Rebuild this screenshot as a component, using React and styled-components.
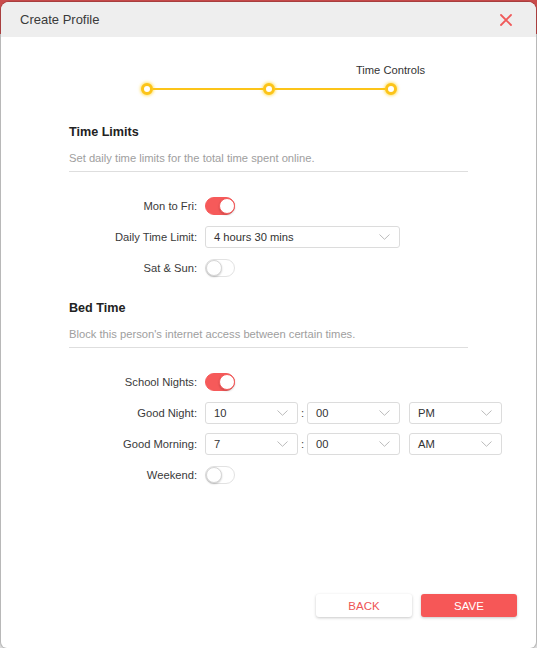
import React from "react";
import styled, { createGlobalStyle } from "styled-components";

const Global = createGlobalStyle`
  html, body { margin: 0; padding: 0; }
  body {
    background: linear-gradient(#c94b4b 0, #c94b4b 34px, #dcdcdc 34px);
    font-family: "Liberation Sans", Arial, sans-serif;
    overflow: hidden;
  }
`;

const Dialog = styled.div`
  margin: 2px 1px 0 1px;
  height: 646px;
  background: #fff;
  border-radius: 8px 8px 6px 6px;
  box-shadow: 0 0 1px 1px rgba(0, 0, 0, 0.18);
  display: flex;
  flex-direction: column;
  overflow: hidden;
`;

const Header = styled.div`
  height: 35px;
  flex: none;
  background: #eeeeee;
  display: flex;
  align-items: center;
  justify-content: space-between;
  padding: 0 23px 0 19px;
`;

const Title = styled.div`
  font-size: 13px;
  color: #3a3a3a;
`;

const CloseBtn = styled.button`
  border: 0;
  background: transparent;
  padding: 0;
  width: 14px;
  height: 14px;
  display: flex;
  align-items: center;
  justify-content: center;
  cursor: pointer;
`;

const Body = styled.div`
  flex: 1;
  display: flex;
  flex-direction: column;
  padding-top: 26px;
`;

const StepLabels = styled.div`
  display: grid;
  grid-template-columns: repeat(3, 122px);
  justify-content: center;
  height: 14px;
`;

const StepLabel = styled.div`
  font-size: 11.2px;
  line-height: 14px;
  color: #333;
  text-align: center;
  white-space: nowrap;
`;

const Track = styled.div`
  display: flex;
  align-items: center;
  justify-content: center;
  margin-top: 6px;
`;

const Dot = styled.div`
  width: 12px;
  height: 12px;
  box-sizing: border-box;
  border-radius: 50%;
  border: 3px solid #fcc419;
  background: #fff;
  box-shadow: 0 0 3px 1px rgba(255, 204, 0, 0.55);
  flex: none;
`;

const Connector = styled.div`
  width: 110px;
  height: 2px;
  background: #fcc419;
  flex: none;
`;

const Section = styled.section`
  padding: 0 68px;
  margin-top: ${(p) => p.$top}px;
`;

const SectionTitle = styled.h3`
  margin: 0;
  font-size: 12.6px;
  line-height: 16px;
  font-weight: 700;
  color: #222;
`;

const SectionDesc = styled.p`
  margin: 11px 0 0;
  font-size: 11.2px;
  line-height: 14px;
  color: #9e9e9e;
  padding-bottom: 6px;
  border-bottom: 1px solid #dedede;
`;

const Rows = styled.div`
  display: flex;
  flex-direction: column;
  gap: 9px;
  margin-top: ${(p) => p.$top}px;
`;

const Row = styled.div`
  display: flex;
  align-items: center;
  height: 22px;
`;

const Label = styled.label`
  width: 128px;
  flex: none;
  text-align: right;
  font-size: 11.2px;
  color: #3a3a3a;
  margin-right: 8px;
  white-space: nowrap;
`;

const Toggle = styled.div`
  position: relative;
  width: 30px;
  height: 18px;
  box-sizing: border-box;
  border-radius: 9px;
  background: ${(p) => (p.$on ? "#f65a5a" : "#fff")};
  border: 1px solid ${(p) => (p.$on ? "#f65a5a" : "#e2e2e2")};
  flex: none;

  &::after {
    content: "";
    position: absolute;
    top: 0;
    left: ${(p) => (p.$on ? "13px" : "0")};
    width: 16px;
    height: 16px;
    box-sizing: border-box;
    border-radius: 50%;
    background: #fff;
    border: 1px solid ${(p) => (p.$on ? "#f65a5a" : "#d6d6d6")};
    box-shadow: 0 1px 2px rgba(0, 0, 0, 0.2);
  }
`;

const Select = styled.div`
  width: ${(p) => p.$w}px;
  height: 22px;
  box-sizing: border-box;
  border: 1px solid #dcdcdc;
  border-radius: 3px;
  background: #fff;
  display: flex;
  align-items: center;
  justify-content: space-between;
  padding: 0 9px 0 8px;
  font-size: 11.2px;
  color: #333;
  flex: none;
  margin-left: ${(p) => p.$ml || 0}px;
`;

const Colon = styled.span`
  width: 9px;
  text-align: center;
  font-size: 11.2px;
  color: #444;
  flex: none;
`;

const Footer = styled.div`
  margin-top: auto;
  display: flex;
  justify-content: flex-end;
  gap: 9px;
  padding: 0 19px 31px 0;
`;

const Button = styled.button`
  width: 96px;
  height: 23px;
  border-radius: 3px;
  border: 0;
  font-family: "Liberation Sans", Arial, sans-serif;
  font-size: 11.5px;
  text-transform: uppercase;
  cursor: pointer;
  background: ${(p) => (p.$primary ? "#f65757" : "#fff")};
  color: ${(p) => (p.$primary ? "#fff" : "#ee5555")};
  box-shadow: 0 1px 3px rgba(0, 0, 0, 0.22);
`;

const Chevron = () => (
  <svg width="11" height="6" viewBox="0 0 11 6" fill="none">
    <path d="M0.5 0.5 L5.5 5.3 L10.5 0.5" stroke="#bbbbbb" strokeWidth="1" />
  </svg>
);

const Dropdown = ({ w, value, ml }) => (
  <Select $w={w} $ml={ml}>
    <span>{value}</span>
    <Chevron />
  </Select>
);

const TimeRow = ({ label, h, m, ap }) => (
  <Row>
    <Label>{label}</Label>
    <Dropdown w={93} value={h} />
    <Colon>:</Colon>
    <Dropdown w={93} value={m} />
    <Dropdown w={93} value={ap} ml={9} />
  </Row>
);

export default function App() {
  return (
    <>
      <Global />
      <Dialog>
        <Header>
          <Title>Create Profile</Title>
          <CloseBtn aria-label="close">
            <svg width="12" height="12" viewBox="0 0 12 12">
              <path d="M1 1 L11 11 M11 1 L1 11" stroke="#f05a5a" strokeWidth="1.8" strokeLinecap="round" />
            </svg>
          </CloseBtn>
        </Header>
        <Body>
          <StepLabels>
            <StepLabel />
            <StepLabel />
            <StepLabel>Time Controls</StepLabel>
          </StepLabels>
          <Track>
            <Dot />
            <Connector />
            <Dot />
            <Connector />
            <Dot />
          </Track>

          <Section $top={29}>
            <SectionTitle>Time Limits</SectionTitle>
            <SectionDesc>Set daily time limits for the total time spent online.</SectionDesc>
            <Rows $top={23}>
              <Row>
                <Label>Mon to Fri:</Label>
                <Toggle $on />
              </Row>
              <Row>
                <Label>Daily Time Limit:</Label>
                <Dropdown w={195} value="4 hours 30 mins" />
              </Row>
              <Row>
                <Label>Sat &amp; Sun:</Label>
                <Toggle />
              </Row>
            </Rows>
          </Section>

          <Section $top={21}>
            <SectionTitle>Bed Time</SectionTitle>
            <SectionDesc>Block this person's internet access between certain times.</SectionDesc>
            <Rows $top={23}>
              <Row>
                <Label>School Nights:</Label>
                <Toggle $on />
              </Row>
              <TimeRow label="Good Night:" h="10" m="00" ap="PM" />
              <TimeRow label="Good Morning:" h="7" m="00" ap="AM" />
              <Row>
                <Label>Weekend:</Label>
                <Toggle />
              </Row>
            </Rows>
          </Section>

          <Footer>
            <Button>Back</Button>
            <Button $primary>Save</Button>
          </Footer>
        </Body>
      </Dialog>
    </>
  );
}
